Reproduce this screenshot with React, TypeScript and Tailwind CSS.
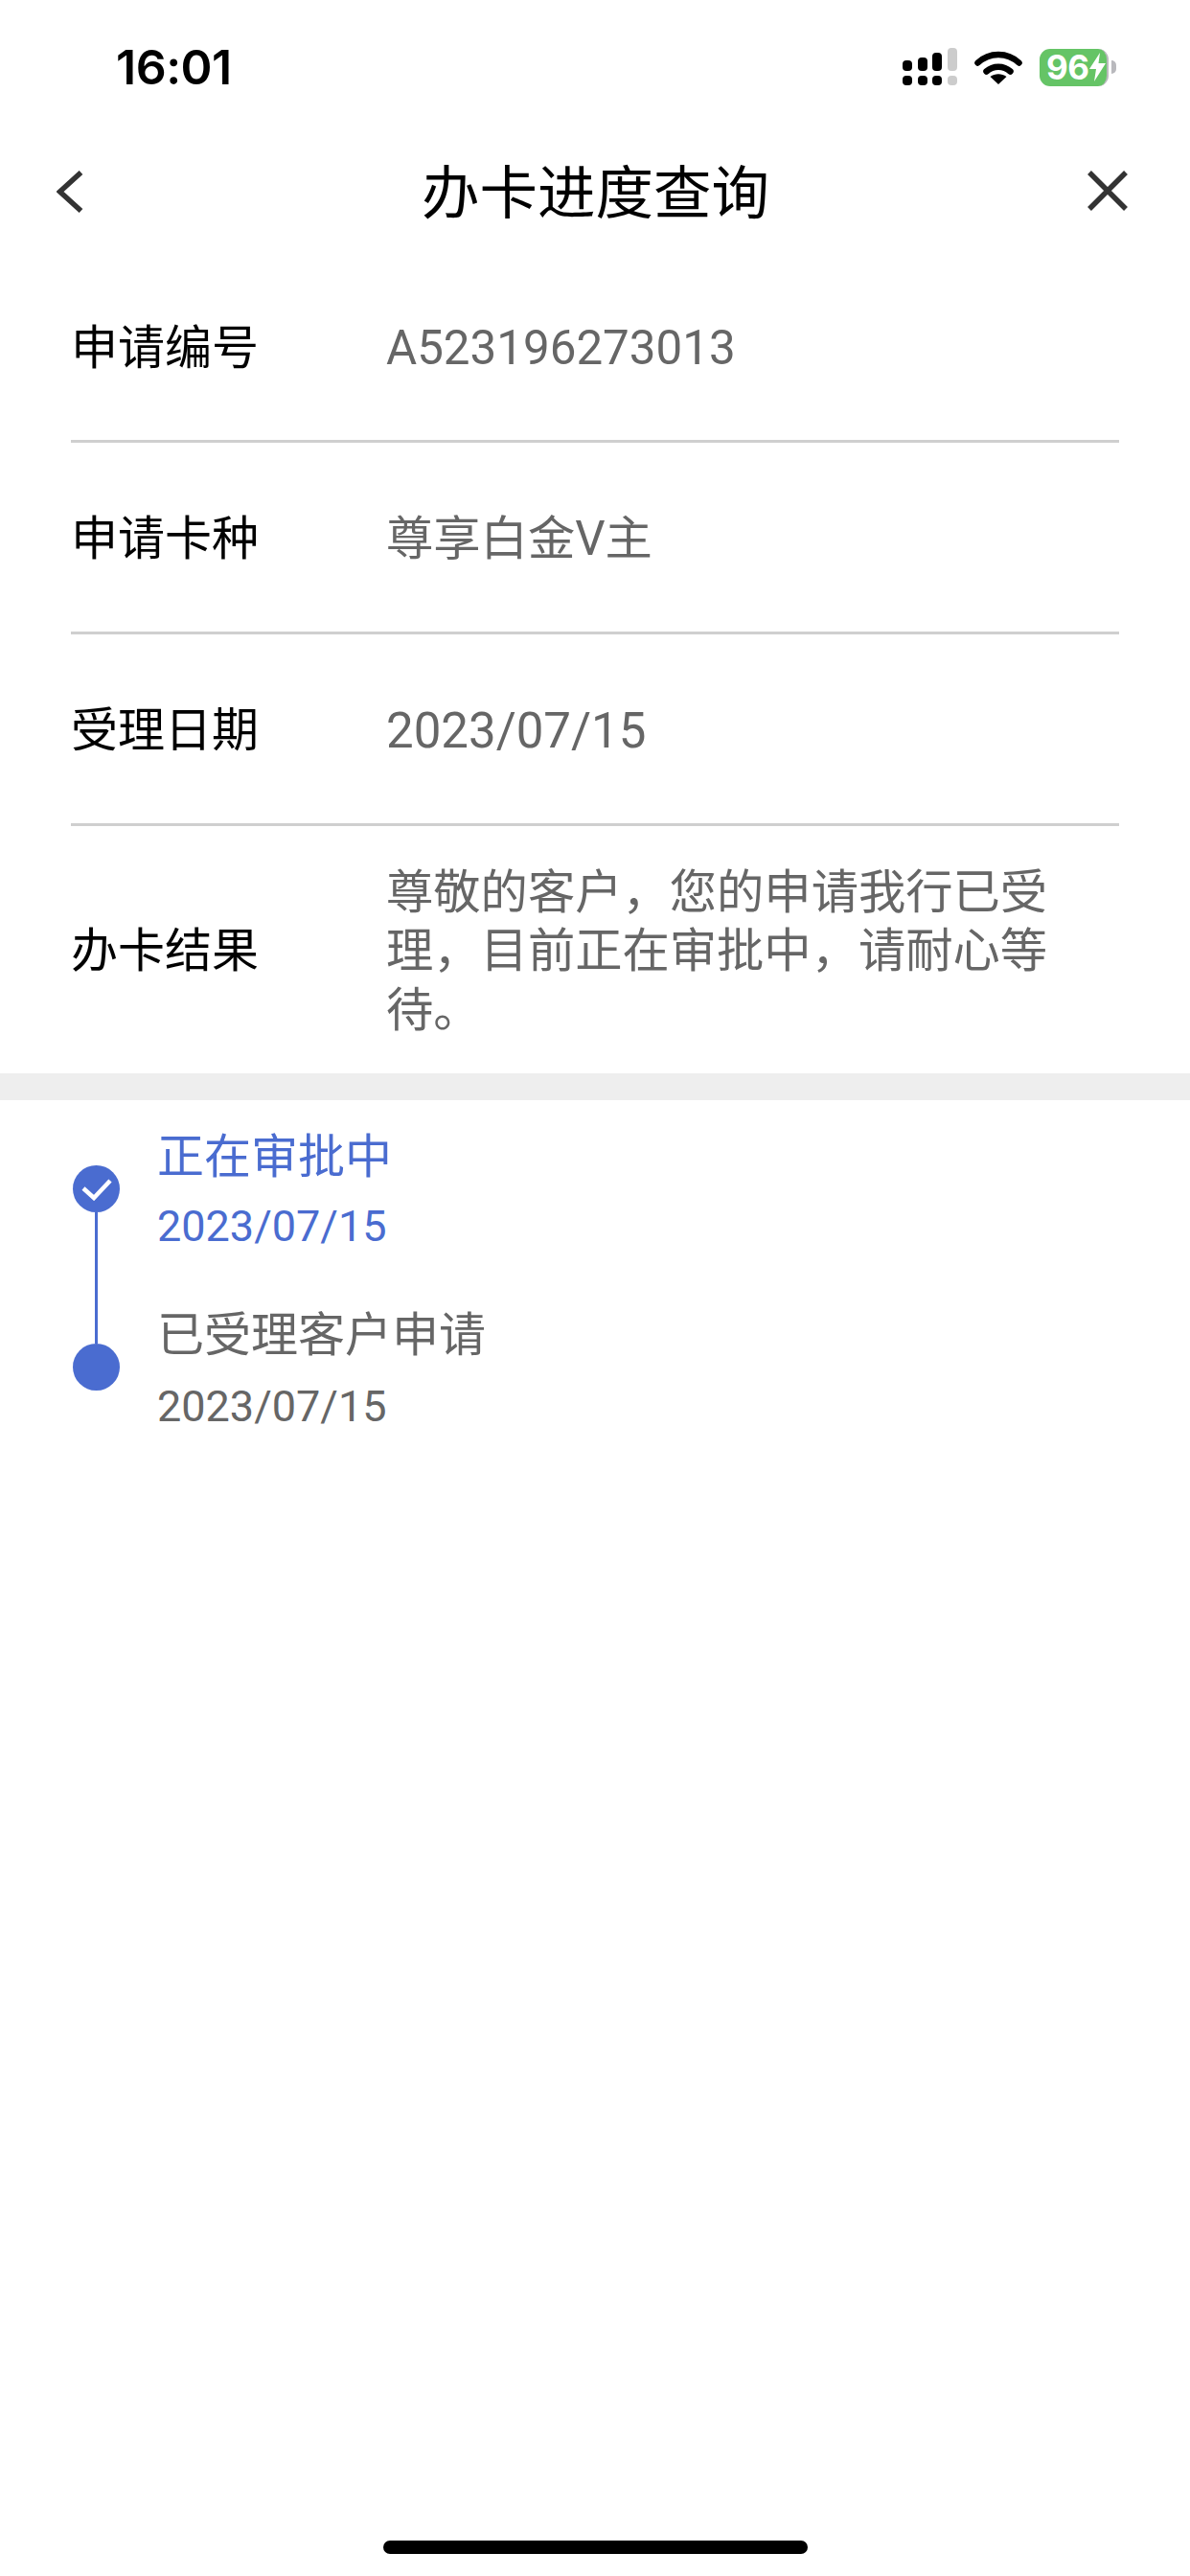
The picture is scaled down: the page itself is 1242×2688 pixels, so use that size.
const fontStack = 'font-["Roboto","Noto_Sans_CJK_SC",sans-serif]';

function StatusIcons() {
  return (
    <div className="flex items-center">
      {/* dual sim signal */}
      <svg width="58" height="40" viewBox="0 0 58 40" className="block">
        <rect x="0" y="13" width="10" height="11" rx="4" fill="#000" />
        <rect x="16" y="10" width="10" height="14" rx="4" fill="#000" />
        <rect x="31" y="5" width="10" height="19" rx="4" fill="#000" />
        <rect x="47" y="0" width="10" height="24" rx="4" fill="#ccc" />
        <rect x="0" y="29" width="10" height="10" rx="4" fill="#000" />
        <rect x="16" y="29" width="10" height="10" rx="4" fill="#000" />
        <rect x="31" y="29" width="10" height="10" rx="4" fill="#000" />
        <rect x="47" y="29" width="10" height="10" rx="4" fill="#ccc" />
      </svg>
      <svg width="50" height="38" viewBox="0 0 50 38" className="ml-[17px] block">
        <path d="M3.5 14.5C15.5 3 34.5 3 46.5 14.5" fill="none" stroke="#000" strokeWidth="6.5" strokeLinecap="round" />
        <path d="M12.5 23.5C19.5 17 30.5 17 37.5 23.5" fill="none" stroke="#000" strokeWidth="6.5" strokeLinecap="round" />
        <path d="M25 37L16.5 29C21.5 25.3 28.5 25.3 33.5 29Z" fill="#000" />
      </svg>
      <div className="ml-[18px] flex items-center">
        <div className="flex h-[39px] w-[72px] items-center rounded-[11px] border-r-[2px] border-[#b9b9bd] bg-[#65c466] pl-[7px]">
          <span className='font-["Inter",sans-serif] text-[35px] leading-none font-bold tracking-[-0.5px] text-white'>96</span>
          <svg width="17" height="30" viewBox="0 0 17 30" className="ml-[1px] block">
            <path d="M11 0L0 17H7L5 30L17 11H9.5Z" fill="#fff" />
          </svg>
        </div>
        <div className="ml-[3px] h-[14px] w-[5px] rounded-r-full bg-[#b9b9bd]" />
      </div>
    </div>
  );
}

function InfoRow({ label, value, last, first, date }: { label: string; value: string; last?: boolean; first?: boolean; date?: boolean }) {
  return (
    <div className={`flex items-center ${first ? 'pt-[3px]' : ''} ${last ? 'h-[258px]' : 'h-[200px] border-b-[3px] border-[#cfcfcf]'}`}>
      <div className="w-[328px] shrink-0 pt-[4px] text-[49px] leading-[62px] text-black">{label}</div>
      <div className={`ml-[1px] w-[700px] pt-[4px] leading-[61.5px] text-[#666] ${date ? 'text-[51px]' : 'text-[49.3px]'}`}>
        {value}
      </div>
    </div>
  );
}

export default function App() {
  return (
    <div className={`flex h-[2688px] w-[1242px] flex-col bg-white ${fontStack}`}>
      {/* status bar */}
      <div className="flex h-[140px] items-start justify-between pt-[50px] pr-[77px] pl-[121px]">
        <span className='font-["Inter",sans-serif] text-[50px] leading-[40px] font-semibold tracking-[-0.5px] text-black'>16:01</span>
        <StatusIcons />
      </div>

      {/* nav */}
      <div className="flex h-[122px] items-start justify-between pt-[38px] pr-[65px] pl-[59px]">
        <div className="w-[42px]">
          <svg width="28" height="44" viewBox="0 0 28 44" className="block">
            <path d="M25.5 2L3.5 22L25.5 42" fill="none" stroke="#333" strokeWidth="5.5" />
          </svg>
        </div>
        <span className="ml-[7px] text-[60.5px] leading-[50px] text-black">办卡进度查询</span>
        <svg width="42" height="42" viewBox="0 0 42 42" className="block">
          <path d="M2 2L40 40M40 2L2 40" fill="none" stroke="#333" strokeWidth="5.5" />
        </svg>
      </div>

      <div className="mx-[74px] flex flex-col">
        <InfoRow first label="申请编号" value="A523196273013" />
        <InfoRow label="申请卡种" value="尊享白金V主" />
        <InfoRow date label="受理日期" value="2023/07/15" />
        <InfoRow last label="办卡结果" value="尊敬的客户，您的申请我行已受理，目前正在审批中，请耐心等待。" />
      </div>

      <div className="h-[28px] bg-[#eeeeee]" />

      {/* timeline */}
      <div className="flex pt-[68px] pl-[76px]">
        <div className="flex w-[49px] flex-col items-center">
          <div className="flex h-[49px] w-[49px] items-center justify-center rounded-full bg-[#4a6cd0]">
            <svg width="34" height="24" viewBox="0 0 34 24" className="block">
              <path d="M3 11L14 21L31 3" fill="none" stroke="#fff" strokeWidth="4.5" />
            </svg>
          </div>
          <div className="h-[137px] w-[3px] bg-[#4a6cd0]" />
          <div className="h-[49px] w-[49px] rounded-full bg-[#4a6cd0]" />
        </div>
        <div className="-mt-[38px] ml-[39px] flex flex-col">
          <div className="text-[49px] leading-[60px] text-[#4a6cd0]">正在审批中</div>
          <div className="mt-[16px] text-[45px] leading-[52px] text-[#4a6cd0]">2023/07/15</div>
          <div className="mt-[58px] text-[49px] leading-[60px] text-[#666]">已受理客户申请</div>
          <div className="mt-[18px] text-[45px] leading-[52px] text-[#666]">2023/07/15</div>
        </div>
      </div>

      <div className="mt-auto mb-[23px] h-[14px] w-[443px] self-center rounded-full bg-black" />
    </div>
  );
}
